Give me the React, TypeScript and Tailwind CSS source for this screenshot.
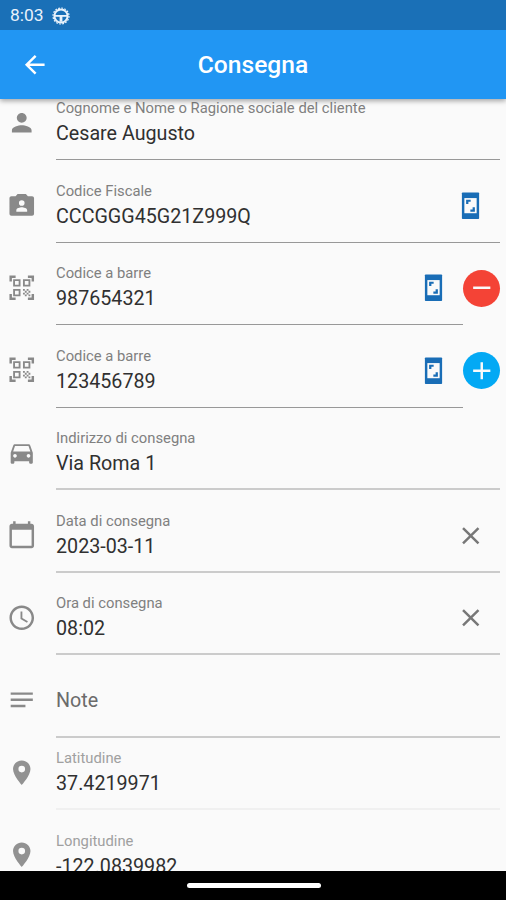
import type { ReactNode } from 'react';
import type { IconType } from 'react-icons';
import {
    MdAccessTime,
    MdAdd,
    MdArrowBack,
    MdCalendarToday,
    MdClose,
    MdDirectionsCar,
    MdNotes,
    MdPerson,
    MdQrCodeScanner,
    MdRemove,
} from 'react-icons/md';

type Line = 'thin' | 'thick' | 'faint';

interface FieldProps {
    icon: IconType;
    label: string;
    value?: string;
    suffix?: ReactNode;
    action?: ReactNode;
    line?: Line;
    compact?: boolean;
    disabled?: boolean;
}

const lines: Record<Line, string> = {
    thin: 'border-b border-[#989898]',
    thick: 'border-b-2 border-[#cbcbcb]',
    faint: 'border-b-2 border-[#f0f0f0]',
};

function Field({ icon: Icon, label, value, suffix, action, line = 'thin', compact, disabled }: FieldProps) {
    return (
        <div className={`flex shrink-0 pl-[6.5px] pr-[6px] ${compact ? 'h-[72.5px]' : 'h-[82.5px]'}`}>
            <div className={`w-[49.5px] shrink-0 ${compact ? 'pt-[20.2px]' : 'pt-[30.4px]'}`}>
                <Icon className={`size-[29.5px] ${disabled ? 'text-[#929292]' : 'text-[#898989]'}`} />
            </div>
            <div className={`flex min-w-0 flex-1 justify-between ${lines[line]}`}>
                {value ? (
                    <div className={compact ? 'pt-[11.8px]' : 'pt-[21.8px]'}>
                        <div className={`text-[14.8px] leading-[18px] whitespace-nowrap ${disabled ? 'text-[#a0a0a0]' : 'text-[#808080]'}`}>
                            {label}
                        </div>
                        <div className="mt-[4.9px] text-[19.7px] leading-6 whitespace-nowrap text-[#303030]">{value}</div>
                    </div>
                ) : (
                    <div className="pt-[34px] text-[19.7px] leading-6 text-[#6b6b6b]">{label}</div>
                )}
                {suffix && <button className="mt-[30.5px] mr-[14.3px] size-[29.5px] shrink-0">{suffix}</button>}
            </div>
            {action}
        </div>
    );
}

// Camera body with a person cut out of it
function CameraPersonIcon({ className }: { className?: string }) {
    return (
        <svg viewBox="0 0 24 24" className={className} fill="currentColor">
            <path
                fillRule="evenodd"
                d="M20.4 5H17l-1.6-1.8H8.6L7 5H3.6C2.7 5 2 5.7 2 6.6v12.8c0 .9.7 1.6 1.6 1.6h16.8c.9 0 1.6-.7 1.6-1.6V6.6c0-.9-.7-1.6-1.6-1.6zM12 8.3a2.3 2.3 0 1 1 0 4.6 2.3 2.3 0 0 1 0-4.6zM16.4 17.6H7.6v-1.2c0-1.5 2.9-2.3 4.4-2.3s4.4.8 4.4 2.3z"
            />
        </svg>
    );
}

// Map pin with a wide hole
function PinIcon({ className }: { className?: string }) {
    return (
        <svg viewBox="0 0 24 24" className={className} fill="currentColor">
            <path
                fillRule="evenodd"
                d="M12 2C8.1 2 4.9 5.1 4.9 9c0 5.25 7.1 13 7.1 13s7.1-7.75 7.1-13c0-3.9-3.2-7-7.1-7zm0 9.7a2.7 2.7 0 1 1 0-5.4 2.7 2.7 0 0 1 0 5.4z"
            />
        </svg>
    );
}

// Phone with a viewfinder on its screen
function ScanIcon() {
    return (
        <svg viewBox="0 0 30 30" className="size-full">
            <rect x="6" y="1.5" width="17.5" height="27" rx="0.8" fill="#196db6" />
            <rect x="8.5" y="7.2" width="12.5" height="15.4" fill="#fafafa" />
            <path d="M10.3 13.3V8.8h4.6V11h-2.3v2.3zM19.2 16.4v4.6h-4.6v-2.2h2.3v-2.4z" fill="#196db6" />
        </svg>
    );
}

function WheelIcon() {
    return (
        <svg viewBox="0 0 18 18" className="size-[18px]" fill="none" stroke="#e9f2fb">
            <circle cx="9" cy="9" r="8" strokeWidth="1.2" strokeDasharray="1.8 1.342" />
            <circle cx="9" cy="9" r="6.6" strokeWidth="2" />
            <path d="M3 8.9h12" strokeWidth="1.8" />
            <path d="M7.6 9h2.8v5.8H7.6z" fill="#e9f2fb" stroke="none" />
        </svg>
    );
}

function RoundButton({ icon: Icon, color }: { icon: IconType; color: string }) {
    return (
        <button className={`mt-[27px] flex size-[37px] shrink-0 items-center justify-center rounded-full ${color}`}>
            <Icon className="size-[29.5px] text-[#fafafa]" />
        </button>
    );
}

const clear = <MdClose className="size-full text-[#777]" />;

export default function App() {
    return (
        <div className="flex h-[900px] w-[506px] flex-col overflow-hidden bg-[#fafafa] font-[Roboto,sans-serif]">
            <div className="relative z-10 shrink-0 shadow-[0_2px_5px_rgba(0,0,0,0.35)]">
                {/* Status bar */}
                <div className="flex h-[30px] items-center gap-2 bg-[#1a70b7] pt-px pl-[10px] text-[17.4px] text-[#e9f2fb]">
                    <span>8:03</span>
                    <WheelIcon />
                </div>
                {/* App bar */}
                <header className="grid h-[69px] grid-cols-[70px_1fr_70px] items-center bg-[#2196f3] text-white">
                    <button className="justify-self-center">
                        <MdArrowBack className="size-[29.5px]" />
                    </button>
                    <h1 className="pt-[2px] text-center text-[24.6px] font-medium">Consegna</h1>
                </header>
            </div>

            <main className="-mt-[21.5px] flex min-h-0 flex-1 flex-col overflow-hidden">
                <Field icon={MdPerson} label="Cognome e Nome o Ragione sociale del cliente" value="Cesare Augusto" />
                <Field icon={CameraPersonIcon} label="Codice Fiscale" value="CCCGGG45G21Z999Q" suffix={<ScanIcon />} />
                <Field
                    icon={MdQrCodeScanner}
                    label="Codice a barre"
                    value="987654321"
                    suffix={<ScanIcon />}
                    action={<RoundButton icon={MdRemove} color="bg-[#f44336]" />}
                />
                <Field
                    icon={MdQrCodeScanner}
                    label="Codice a barre"
                    value="123456789"
                    suffix={<ScanIcon />}
                    action={<RoundButton icon={MdAdd} color="bg-[#03a9f4]" />}
                />
                <Field icon={MdDirectionsCar} label="Indirizzo di consegna" value="Via Roma 1" line="thick" />
                <Field icon={MdCalendarToday} label="Data di consegna" value="2023-03-11" suffix={clear} line="thick" />
                <Field icon={MdAccessTime} label="Ora di consegna" value="08:02" suffix={clear} line="thick" />
                <Field icon={MdNotes} label="Note" line="thick" />
                <Field icon={PinIcon} label="Latitudine" value="37.4219971" line="faint" compact disabled />
                <Field icon={PinIcon} label="Longitudine" value="-122.0839982" line="faint" disabled />
            </main>

            {/* Navigation bar */}
            <div className="flex h-[29px] shrink-0 justify-center bg-black pt-3">
                <div className="ml-[1px] h-[5px] w-[134px] rounded-full bg-white" />
            </div>
        </div>
    );
}
